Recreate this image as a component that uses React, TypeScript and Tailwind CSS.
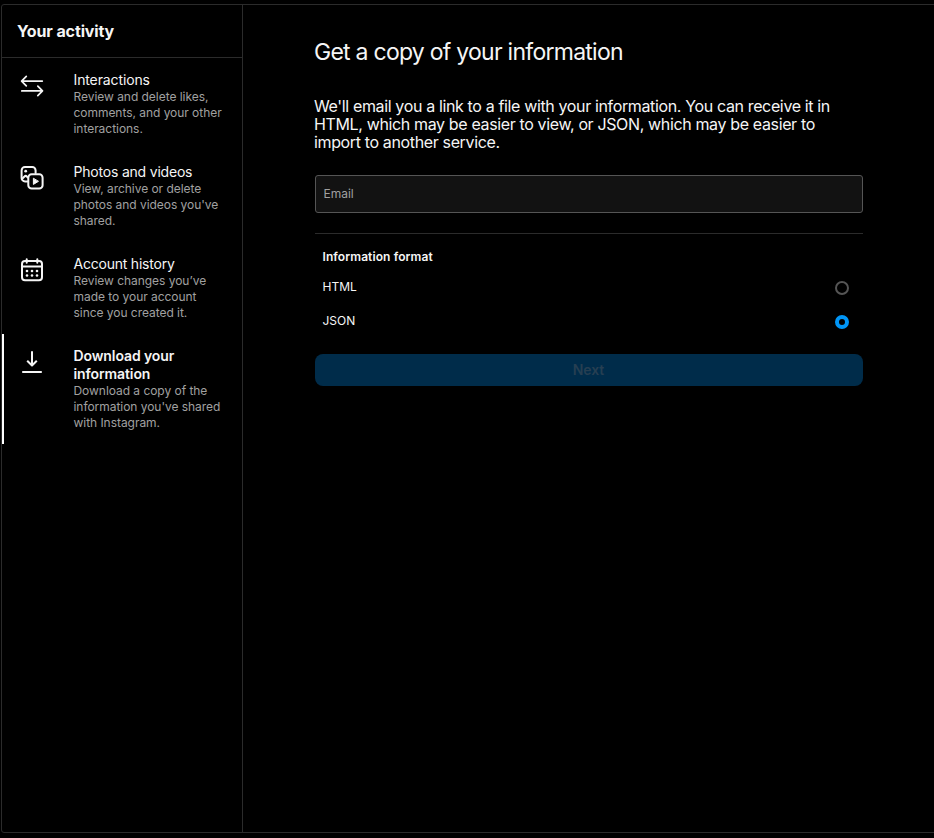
import React from "react";

type Item = {
  title: string[];
  titleClass: string;
  lines: string[];
  icon: React.ReactNode;
  active?: boolean;
};

function ArrowsIcon() {
  return (
    <svg width="24" height="24" viewBox="0 0 24 24" fill="none" stroke="currentColor" strokeWidth="1.7" strokeLinecap="round" strokeLinejoin="round">
      <path d="M22.3 7.1H1.8M6.3 2.4 1.6 7.1l4.7 4.7M1.8 16.9h20.5M17.8 12.2l4.7 4.7-4.7 4.7" />
    </svg>
  );
}

function MediaIcon() {
  return (
    <svg width="24" height="24" viewBox="0 0 24 24" fill="none" stroke="currentColor" strokeWidth="2" strokeLinejoin="round" strokeLinecap="round">
      <path d="M7.5 15.4H5A3.4 3.4 0 0 1 1.6 12V4.4A3.4 3.4 0 0 1 5 1h7.2a3.4 3.4 0 0 1 3.4 3.4V7" />
      <rect x="8.3" y="8.3" width="14.3" height="14.3" rx="3.4" />
      <path d="M2.2 12.8l2.3-2.3c.7-.7 1.6-.7 2.3 0l1 1" />
      <circle cx="5.7" cy="5.2" r="1.4" fill="currentColor" stroke="none" />
      <path d="M13.4 12.6v5.8l4.8-2.9z" fill="currentColor" strokeWidth="1" />
    </svg>
  );
}

function CalendarIcon() {
  return (
    <svg width="24" height="24" viewBox="0 0 24 24" fill="none" stroke="currentColor" strokeWidth="2" strokeLinejoin="round" strokeLinecap="round">
      <rect x="2" y="3" width="20" height="19.3" rx="3" />
      <path d="M2 8.5h20M6.7 1.2v3.6M17.3 1.2v3.6" />
      <g fill="currentColor" stroke="none">
        <circle cx="7" cy="13" r="1.3" />
        <circle cx="12" cy="13" r="1.3" />
        <circle cx="17" cy="13" r="1.3" />
        <circle cx="7" cy="17.5" r="1.3" />
        <circle cx="12" cy="17.5" r="1.3" />
        <circle cx="17" cy="17.5" r="1.3" />
      </g>
    </svg>
  );
}

function DownloadIcon() {
  return (
    <svg width="24" height="24" viewBox="0 0 24 24" fill="none" stroke="currentColor" strokeWidth="2" strokeLinejoin="round">
      <path d="M12 1.2v14M7.2 10.7 12 15.5l4.8-4.8M2.2 22h19.6" />
    </svg>
  );
}

const items: Item[] = [
  {
    title: ["Interactions"],
    titleClass: "tracking-[-0.12px]",
    lines: ["Review and delete likes,", "comments, and your other", "interactions."],
    icon: <ArrowsIcon />,
  },
  {
    title: ["Photos and videos"],
    titleClass: "tracking-[-0.2px]",
    lines: ["View, archive or delete", "photos and videos you've", "shared."],
    icon: <MediaIcon />,
  },
  {
    title: ["Account history"],
    titleClass: "tracking-[-0.22px]",
    lines: ["Review changes you’ve", "made to your account", "since you created it."],
    icon: <CalendarIcon />,
  },
  {
    title: ["Download your", "information"],
    titleClass: "font-semibold tracking-[-0.1px]",
    lines: ["Download a copy of the", "information you've shared", "with Instagram."],
    icon: <DownloadIcon />,
    active: true,
  },
];

function SidebarItem({ item }: { item: Item }) {
  return (
    <a
      className={
        "flex border-l-2 py-[13px] pl-4 " + (item.active ? "border-white" : "border-transparent")
      }
    >
      <span className="mt-[3px] mr-[29.5px] h-6 w-6 shrink-0">{item.icon}</span>
      <span className="block whitespace-nowrap">
        {item.title.map((t) => (
          <span key={t} className={"block text-sm leading-[18px] " + item.titleClass}>{t}</span>
        ))}
        {item.lines.map((l) => (
          <span key={l} className="block text-xs leading-4 tracking-[-0.04px] text-[#a0a0a0]">{l}</span>
        ))}
      </span>
    </a>
  );
}

export default function App() {
  return (
    <div className="h-[838px] w-[934px] overflow-hidden bg-black pt-1 pl-px font-['Inter',sans-serif] text-[#f5f5f5]">
      <div className="flex h-[829px] w-[940px] rounded-[3px] border border-[#2b2b2b]">
        <aside className="w-[241px] shrink-0 border-r border-[#2b2b2b]">
          <h2 className="flex h-[53px] items-center border-b border-[#2b2b2b] pl-[15px] text-base font-bold tracking-[-0.12px]">Your activity</h2>
          <nav>
            {items.map((item) => (
              <SidebarItem key={item.title[0]} item={item} />
            ))}
          </nav>
        </aside>
        <main className="ml-[72px] w-[548px] shrink-0 whitespace-nowrap">
          <h1 className="-ml-px mt-[33px] text-[23px] leading-7 tracking-[-0.74px]">Get a copy of your information</h1>
          <p className="-ml-px mt-[31px] text-base leading-[18px] tracking-[-0.36px]">
            We'll email you a link to a file with your information. You can receive it in
            <br />
            HTML, which may be easier to view, or JSON, which may be easier to
            <br />
            import to another service.
          </p>
          <input
            placeholder="Email"
            className="mt-6 block h-[38px] w-full rounded-[3px] border border-[#555555] bg-[#121212] px-[7.5px] pb-0.5 text-xs placeholder:text-[#a0a0a0]"
          />
          <div className="mt-5 border-t border-[#2b2b2b] px-[7.5px] pt-[14px] text-xs leading-[18px]">
            <h3 className="font-semibold tracking-[0.1px]">Information format</h3>
            <label className="mt-3 flex h-[18px] justify-between pr-[6.5px]">
              <span>HTML</span>
              <span className="mt-[3px] h-[14px] w-[14px] rounded-full border-2 border-[#555555]" />
            </label>
            <label className="mt-4 flex h-[18px] justify-between pr-[6.5px]">
              <span>JSON</span>
              <span className="mt-[3px] h-[14px] w-[14px] rounded-full border-4 border-[#0095f6]" />
            </label>
          </div>
          <button className="mt-6 block h-8 w-full rounded-lg bg-[#002c4a] pr-px text-sm font-semibold tracking-[-0.1px] text-[#263f52]">Next</button>
        </main>
      </div>
    </div>
  );
}
